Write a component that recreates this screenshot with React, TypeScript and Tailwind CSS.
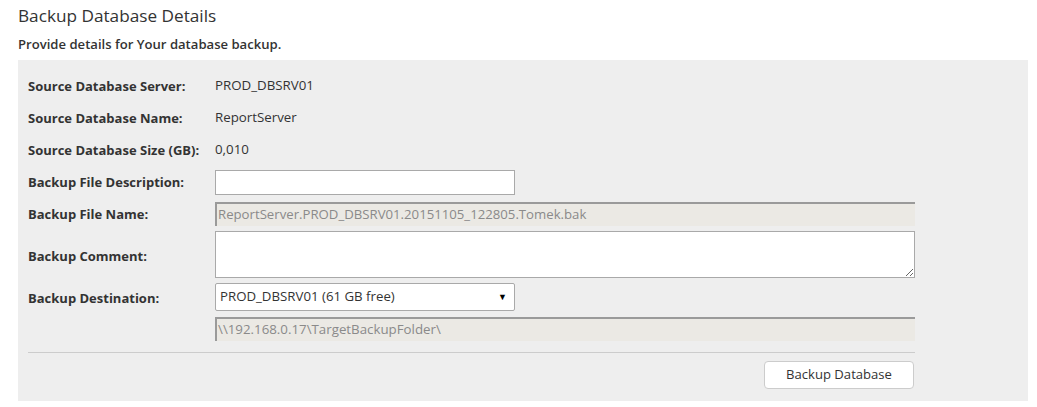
import React from "react";

const font = { fontFamily: '"Open Sans", "Noto Sans", sans-serif' };

function Row({ label, children, h, lp = "pt-[1px]" }: { label: string; children?: React.ReactNode; h: string; lp?: string }) {
  return (
    <div className={`flex items-center ${h}`}>
      <div className={`w-[187px] shrink-0 text-[13px] font-bold text-[#333] ${lp}`}>{label}</div>
      <div className="flex-1 text-[13.3px] text-[#333]">{children}</div>
    </div>
  );
}

export default function App() {
  return (
    <div className="bg-white w-[1037px] h-[407px] pl-[18px]" style={font}>
      <div className="h-[32px] pt-[3px] text-[17.2px] text-[#333] leading-[26px]">Backup Database Details</div>
      <div className="h-[28px] pt-[3px] text-[13.1px] font-semibold text-[#333] leading-[18px]">
        Provide details for Your database backup.
      </div>
      <div className="w-[1010px] h-[341px] bg-[#eeeeee] pl-[10px] pt-[10px]">
        <div className="w-[887px]">
          <Row label="Source Database Server:" h="h-[32px]">PROD_DBSRV01</Row>
          <Row label="Source Database Name:" h="h-[32px]">ReportServer</Row>
          <Row label="Source Database Size (GB):" h="h-[32px]">0,010</Row>
          <Row label="Backup File Description:" h="h-[32px]">
            <div className="w-[300px] h-[25px] bg-white border border-[#a9a9a9]" />
          </Row>
          <Row label="Backup File Name:" h="h-[32px]">
            <div className="w-[700px] h-[24px] bg-[#ebe9e4] border-t-2 border-l-2 border-[#9a9a9a] pl-[1px] leading-[20px] text-[#8a8a8a] text-[13.2px]">
              ReportServer.PROD_DBSRV01.20151105_122805.Tomek.bak
            </div>
          </Row>
          <Row label="Backup Comment:" h="h-[49px]" lp="pt-[5px]">
            <textarea className="block w-[700px] h-[47px] bg-white border border-[#a9a9a9] outline-none" />
          </Row>
          <Row label="Backup Destination:" h="h-[36px]" lp="pt-[3px]">
            <div className="w-[300px] h-[28px] bg-white border border-[#a9a9a9] rounded-[2px] flex items-center justify-between pl-[4px] pr-[7px] text-[#333] text-[13.25px]">
              <span>PROD_DBSRV01 (61 GB free)</span>
              <span className="text-[9px] text-black">▼</span>
            </div>
          </Row>
          <div className="flex h-[28px] items-start pt-[2px]">
            <div className="w-[187px] shrink-0" />
            <div className="w-[700px] h-[24px] bg-[#ebe9e4] border-t-2 border-l-2 border-[#9a9a9a] pl-[1px] leading-[20px] text-[#8a8a8a] text-[13.3px]">
              \\192.168.0.17\TargetBackupFolder\
            </div>
          </div>
          <div className="mt-[9px] border-t border-[#cccccc]" />
          <div className="flex justify-end pt-[8px] pr-[1px]">
            <button className="w-[150px] h-[28px] bg-white border border-[#cccccc] rounded-[4px] text-[13.1px] text-[#333]">
              Backup Database
            </button>
          </div>
        </div>
      </div>
    </div>
  );
}
